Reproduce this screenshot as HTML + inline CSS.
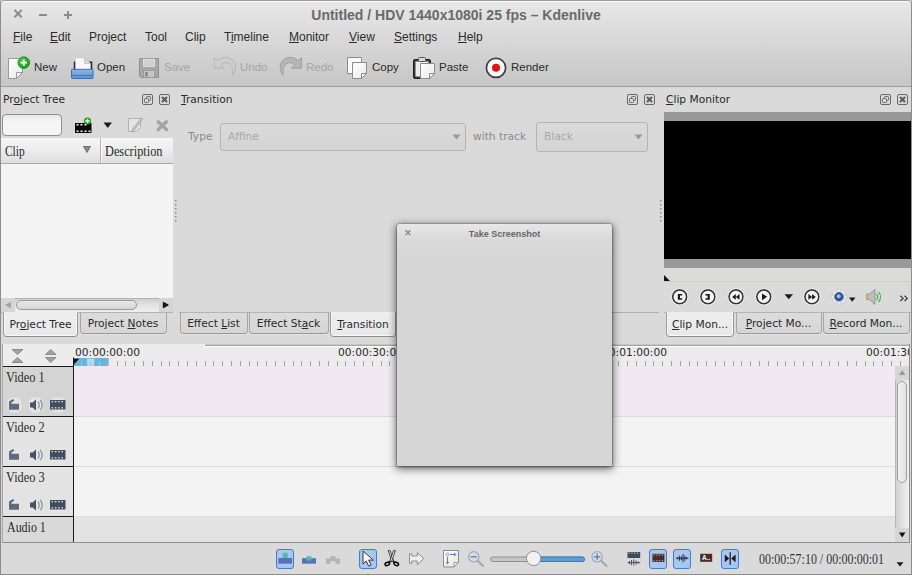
<!DOCTYPE html>
<html><head><meta charset="utf-8"><title>Kdenlive</title>
<style>
*{box-sizing:border-box;margin:0;padding:0}
html,body{width:912px;height:575px;overflow:hidden;background:#bdbdbd}
body{position:relative;font-family:"DejaVu Sans","Liberation Sans",sans-serif;font-size:10.67px;color:#2a2a2a}
.a{position:absolute}
svg{position:absolute;overflow:visible}
#win{position:absolute;left:0;top:0;width:912px;height:575px;background:#dadada;border-top-left-radius:4px;border-top-right-radius:4px;overflow:hidden}
#chrome{position:absolute;left:0;top:0;width:912px;height:86px;background:linear-gradient(#e8e8e8 0,#dedede 25px,#d5d5d5 48px,#c6c6c6 86px)}
#title{position:absolute;left:0;top:6.400px;width:912px;text-align:center;font:bold 14px "Liberation Sans",sans-serif;color:#6a6a6a;line-height:18px}
.wb{position:absolute;color:#8c8c8c}
.menu{position:absolute;top:30px;font:12px "Liberation Sans",sans-serif;color:#2b2b2b;line-height:14px;white-space:nowrap}
u{text-decoration:underline;text-underline-offset:1px}
.tb{position:absolute;top:59.700px;font:11.500px "Liberation Sans",sans-serif;color:#2b2b2b;line-height:14px;white-space:nowrap}
.tb.dis{color:#a4a4a4}
.dt{position:absolute;white-space:nowrap;line-height:13px;color:#2a2a2a}
.serif{font-family:"Liberation Serif",serif;position:absolute;white-space:nowrap;transform-origin:0 0;color:#2a2a2a}
.tab{position:absolute;top:312px;border:1px solid #a6a6a6;border-top-color:#b4b4b4;border-radius:0 0 4px 4px;background:linear-gradient(#dcdcdc,#d6d6d6);text-align:center;white-space:nowrap;line-height:21px;height:22px;color:#2a2a2a;box-shadow:0 1px 0 #e4e4e4;border-bottom-color:#979797;text-indent:-1px}
.tab.act{background:linear-gradient(#eeeeee,#e8e8e8);height:25px;line-height:24px;border-top-color:#eee;border-color:#eee #9a9a9a #8e8e8e #9a9a9a;box-shadow:inset 0 -1px 0 #f8f8f8,inset 1px 0 0 #f6f6f6,inset -1px 0 0 #f6f6f6;text-indent:0}
.dbtn{position:absolute;top:94px;width:11px;height:11px;border:1px solid #6a6a6a;border-radius:2px}
.combo{position:absolute;border:1px solid #b4b4b4;border-radius:3px;background:linear-gradient(#dadada,#d4d4d4);color:#a8a8a8;line-height:26px;padding-left:7px}
.sel{position:absolute;top:549px;height:20px;border:1px solid #3b7fd6;border-radius:3px;background:#a9c6ee}
.trk{position:absolute;left:3px;width:71px;background:#d6d6d6;border-top:1px solid #1a1a1a;border-right:1px solid #1a1a1a}
.tl{position:absolute;left:74px;width:821px}
.rl{position:absolute;top:347px;line-height:12px;white-space:nowrap;color:#2a2a2a}
</style></head><body>
<div id="win">
<div id="chrome"></div>
<div id="title">Untitled / HDV 1440x1080i 25 fps – Kdenlive</div>
<!-- window buttons -->
<svg class="wb" style="left:0;top:0" width="90" height="28" viewBox="0 0 90 28"><g stroke="#8c8c8c" stroke-width="2" fill="none"><path d="M14.500 10l7.200 7.200M21.700 10l-7.200 7.200"/><path d="M39 15h8"/><path d="M64 15h8M68 11v8"/></g></svg>
<!-- menu -->
<div class="menu" style="left:13px"><u>F</u>ile</div>
<div class="menu" style="left:50px"><u>E</u>dit</div>
<div class="menu" style="left:89px">Project</div>
<div class="menu" style="left:145px">Tool</div>
<div class="menu" style="left:185px">Clip</div>
<div class="menu" style="left:224px">T<u>i</u>meline</div>
<div class="menu" style="left:289px"><u>M</u>onitor</div>
<div class="menu" style="left:349px"><u>V</u>iew</div>
<div class="menu" style="left:394px"><u>S</u>ettings</div>
<div class="menu" style="left:458px"><u>H</u>elp</div>
<!-- toolbar labels -->
<div class="tb" style="left:34px">New</div>
<div class="tb" style="left:97px">Open</div>
<div class="tb dis" style="left:164px">Save</div>
<div class="tb dis" style="left:240px">Undo</div>
<div class="tb dis" style="left:306px">Redo</div>
<div class="tb" style="left:372px">Copy</div>
<div class="tb" style="left:439px">Paste</div>
<div class="tb" style="left:511px">Render</div>
<div class="a" style="left:0;top:86px;width:912px;height:1px;background:#a0a0a0"></div>
<!--TBI-S--><svg style="left:0;top:48px" width="560" height="40" viewBox="0 48 560 40">
<defs>
<linearGradient id="pg" x1="0" y1="0" x2="1" y2="1"><stop offset="0" stop-color="#ffffff"/><stop offset="1" stop-color="#e9e9e9"/></linearGradient>
<linearGradient id="fold" x1="0" y1="0" x2="0" y2="1"><stop offset="0" stop-color="#8fb6e6"/><stop offset="1" stop-color="#5d8fd0"/></linearGradient>
<radialGradient id="grn" cx="0.4" cy="0.35" r="0.7"><stop offset="0" stop-color="#4fd04a"/><stop offset="1" stop-color="#0f9a10"/></radialGradient>
</defs>
<!-- New -->
<path d="M8.5 58.5h14v14l-6 6h-8z" fill="url(#pg)" stroke="#9a9a9a" stroke-width="1"/>
<path d="M16.5 78.5v-6h6z" fill="#f6f6f6" stroke="#9a9a9a" stroke-width="1" stroke-linejoin="round"/>
<circle cx="23.8" cy="62.6" r="5.8" fill="url(#grn)" stroke="#0b8a0c" stroke-width="0.8"/>
<path d="M20.6 62.6h6.4M23.8 59.4v6.4" stroke="#fff" stroke-width="1.9" fill="none"/>
<!-- Open -->
<path d="M73.800 61.500h18.500v9h-18.500z" fill="#1b2a4c"/>
<path d="M75.500 58h9l6 5.500v8h-15z" fill="#f8f8f8" stroke="#cfcfcf" stroke-width="0.600"/>
<path d="M84.500 58v5.500h6z" fill="#dedede" stroke="#b4b4b4" stroke-width="0.600" stroke-linejoin="round"/>
<rect x="71.500" y="69.300" width="21.500" height="9.200" rx="0.800" fill="url(#fold)" stroke="#3f6fb5" stroke-width="1"/>
<path d="M72 75.500h20.500" stroke="#4674bc" stroke-width="1"/>
<!-- Save (disabled) -->
<g opacity="0.55">
<path d="M139.500 58.500h19v19h-17.500l-1.500-1.500z" fill="#8a8a8a" stroke="#5e5e5e" stroke-width="1"/>
<rect x="142.500" y="58.500" width="13" height="9" fill="#e8e8e8" stroke="#6a6a6a" stroke-width="0.6"/>
<path d="M144 61h10M144 63h10M144 65h10" stroke="#b0b0b0" stroke-width="0.7"/>
<rect x="143.500" y="70.500" width="11" height="7" fill="#c4c4c4" stroke="#5e5e5e" stroke-width="0.6"/>
<rect x="145" y="72" width="3" height="4.500" fill="#5e5e5e"/>
</g>
<!-- Undo (disabled) -->
<path d="M214.200 58L218 60.500C222 55.500 232 56 235 64C236.500 69 234.500 73 232.500 75C233.500 70 232 64.500 227.500 63C224.500 62 222 63.500 221 65L224.200 68.200L214.200 68.200Z" fill="#cecece" stroke="#b2b2b2" stroke-width="0.900" stroke-linejoin="round"/>
<!-- Redo (disabled) -->
<path d="M301.500 58L297.700 60.500C293.700 55.500 283.700 56 280.700 64C279.200 69 281.200 73 283.200 75C282.200 70 283.700 64.500 288.200 63C291.200 62 293.700 63.500 294.700 65L291.500 68.200L301.500 68.200Z" fill="#b6b6b6" stroke="#9c9c9c" stroke-width="0.900" stroke-linejoin="round"/>
<!-- Copy -->
<path d="M347.500 57.500h14v16h-14z" fill="#fbfbfb" stroke="#8c8c8c" stroke-width="1"/>
<path d="M352.500 62.500h14v11l-5 5h-9z" fill="url(#pg)" stroke="#8c8c8c" stroke-width="1"/>
<path d="M361.500 78.500v-5h5z" fill="#f4f4f4" stroke="#8c8c8c" stroke-width="1" stroke-linejoin="round"/>
<!-- Paste -->
<rect x="413.500" y="59.500" width="17" height="19" rx="1.500" fill="#3a3a3a" stroke="#1e1e1e" stroke-width="1"/>
<rect x="415.500" y="61.500" width="13" height="15" fill="#ededed"/>
<rect x="418.500" y="57.500" width="7" height="4" rx="1" fill="#d8d8d8" stroke="#555" stroke-width="1"/>
<path d="M420.500 63.500h14v10l-5 5h-9z" fill="url(#pg)" stroke="#8c8c8c" stroke-width="1"/>
<path d="M429.500 78.500v-5h5z" fill="#f4f4f4" stroke="#8c8c8c" stroke-width="1" stroke-linejoin="round"/>
<!-- Render -->
<circle cx="496" cy="67.800" r="10.800" fill="#c4c4c4"/>
<circle cx="496" cy="67.800" r="9.600" fill="#f8f8f8" stroke="#3c3c3c" stroke-width="1.600"/>
<circle cx="496" cy="67.800" r="4" fill="#e01212"/>
</svg>
<!--TBI-E-->
<!--DK-S--><!-- Project Tree dock -->
<div class="dt" style="left:3px;top:93px">Pr<u>o</u>ject Tree</div>
<svg style="left:142px;top:94px" width="30" height="11" viewBox="0 0 30 11"><g fill="none" stroke="#6a6a6a" stroke-width="1"><rect x="0.500" y="0.500" width="10" height="10" rx="1.500"/><rect x="4.500" y="2.500" width="4" height="4" rx="0.800"/><rect x="2.500" y="4.500" width="4" height="4" rx="0.800" fill="#dadada"/><rect x="17.500" y="0.500" width="10" height="10" rx="1.500"/></g><path d="M20 3l5 5M25 3l-5 5" stroke="#5a5a5a" stroke-width="2"/></svg>
<div class="a" style="left:2px;top:114px;width:60px;height:22px;border:1px solid #919191;border-radius:4px;background:linear-gradient(#e6e6e6,#f5f5f5 30%,#f5f5f5)"></div>
<svg style="left:70px;top:112px" width="104" height="26" viewBox="70 112 104 26">
<!-- add clip -->
<rect x="75" y="123" width="16.500" height="10" fill="#0c0c0c"/>
<g fill="#f0f0f0"><rect x="76.500" y="124" width="2" height="1.500"/><rect x="80.500" y="124" width="2" height="1.500"/><rect x="84.500" y="124" width="2" height="1.500"/><rect x="76.500" y="130.500" width="2" height="1.500"/><rect x="80.500" y="130.500" width="2" height="1.500"/><rect x="84.500" y="130.500" width="2" height="1.500"/><rect x="88.500" y="130.500" width="2" height="1.500"/></g>
<circle cx="87.500" cy="121" r="3.600" fill="#1aa51a"/><path d="M85.300 121h4.400M87.500 118.800v4.400" stroke="#fff" stroke-width="1.300"/>
<path d="M103.500 122.500h8.500l-4.250 5.500z" fill="#1c1c1c"/>
<!-- edit (disabled) -->
<g opacity="0.85"><path d="M128.500 118.500h12v9l-4 4h-8z" fill="#e6e6e6" stroke="#aaaaaa" stroke-width="1"/><path d="M141.500 117.500l-9 11.500-1 2.500 2.500-1 9-11.500z" fill="#bcbcbc" stroke="#a0a0a0" stroke-width="0.700"/></g>
<!-- delete (disabled) -->
<path d="M158.200 121.800l8.300 7.800M166.500 121.800l-8.300 7.800" stroke="#a4a4a4" stroke-width="3.400" stroke-linecap="round"/>
</svg>
<!-- tree header -->
<div class="a" style="left:1px;top:138px;width:172px;height:26px;background:linear-gradient(#f6f6f6,#ececec 50%,#dedede);border-bottom:1px solid #a8a8a8"></div>
<div class="a" style="left:100px;top:138px;width:1px;height:25px;background:#b4b4b4"></div>
<div class="a" style="left:101px;top:138px;width:1px;height:25px;background:#f8f8f8"></div>
<div class="serif" id="hclip" style="left:5px;top:143px;font-size:14.670px;line-height:17px;transform:scaleX(0.780)">Clip</div>
<div class="serif" id="hdesc" style="left:105px;top:143px;font-size:14.670px;line-height:17px;transform:scaleX(0.840)">Description</div>
<svg style="left:83px;top:146px" width="8" height="7" viewBox="0 0 8 7"><path d="M0.500 0.500h7l-3.500 6z" fill="#8c8c8c" stroke="#5c5c5c" stroke-width="0.800"/></svg>
<div class="a" style="left:1px;top:164px;width:172px;height:134px;background:#f4f4f4"></div>
<!-- h scrollbar -->
<div class="a" style="left:1px;top:298px;width:172px;height:14px;background:#d5d5d5"></div>
<div class="a" style="left:15px;top:298px;width:144px;height:14px;background:linear-gradient(#cfcfcf,#e0e0e0 40%,#f0f0f0);border-top:1px solid #b2b2b2"></div>
<div class="a" style="left:16px;top:300px;width:121px;height:10px;border:1px solid #9a9a9a;border-radius:5px;background:linear-gradient(#e8e8e8,#d6d6d6)"></div>
<svg style="left:4px;top:300px" width="166" height="10" viewBox="4 300 166 10"><path d="M10.900 302v6.200l-6-3.100z" fill="#a2a2a2"/><path d="M163.500 302.500v5l4.500-2.500z" fill="#161616" stroke="#161616" stroke-width="1.400" stroke-linejoin="round"/></svg>
<!-- tabs left -->
<div class="a" style="left:1px;top:312px;width:172px;height:1px;background:#b0b0b0"></div>
<div class="tab act" style="left:3px;width:75px">Pr<u>o</u>ject Tree</div>
<div class="tab" style="left:80px;width:87px">Project <u>N</u>otes</div>
<!-- splitter handles -->
<svg style="left:174px;top:200px" width="4" height="26" viewBox="0 0 4 26"><g fill="#8c8c8c"><rect x="1" y="0" width="1.500" height="1.500"/><rect x="1" y="4" width="1.500" height="1.500"/><rect x="1" y="8" width="1.500" height="1.500"/><rect x="1" y="12" width="1.500" height="1.500"/><rect x="1" y="16" width="1.500" height="1.500"/><rect x="1" y="20" width="1.500" height="1.500"/></g></svg>
<svg style="left:659px;top:200px" width="4" height="26" viewBox="0 0 4 26"><g fill="#8c8c8c"><rect x="1" y="0" width="1.500" height="1.500"/><rect x="1" y="4" width="1.500" height="1.500"/><rect x="1" y="8" width="1.500" height="1.500"/><rect x="1" y="12" width="1.500" height="1.500"/><rect x="1" y="16" width="1.500" height="1.500"/><rect x="1" y="20" width="1.500" height="1.500"/></g></svg>
<!-- Transition dock -->
<div class="dt" style="left:181px;top:93px"><u>T</u>ransition</div>
<svg style="left:627px;top:94px" width="30" height="11" viewBox="0 0 30 11"><g fill="none" stroke="#6a6a6a" stroke-width="1"><rect x="0.500" y="0.500" width="10" height="10" rx="1.500"/><rect x="4.500" y="2.500" width="4" height="4" rx="0.800"/><rect x="2.500" y="4.500" width="4" height="4" rx="0.800" fill="#dadada"/><rect x="17.500" y="0.500" width="10" height="10" rx="1.500"/></g><path d="M20 3l5 5M25 3l-5 5" stroke="#5a5a5a" stroke-width="2"/></svg>
<div class="dt" style="left:188px;top:130px;color:#8a8a8a">Type</div>
<div class="combo" style="left:220px;top:123px;width:246px;height:28px">Affine</div>
<div class="dt" style="left:473px;top:130px;color:#8a8a8a">with track</div>
<div class="combo" style="left:536px;top:122px;width:112px;height:30px;line-height:28px">Black</div>
<svg style="left:452px;top:134px" width="192" height="6" viewBox="452 134 192 6"><path d="M452.500 134.500h8l-4 5z" fill="#9a9a9a"/><path d="M634.500 134.500h8l-4 5z" fill="#9a9a9a"/></svg>
<div class="a" style="left:179px;top:312px;width:480px;height:1px;background:#b0b0b0"></div>
<div class="tab" style="left:180px;width:68px">Effect <u>L</u>ist</div>
<div class="tab" style="left:249px;width:80px">Effect St<u>a</u>ck</div>
<div class="tab act" style="left:330px;width:66px"><u>T</u>ransition</div>
<!-- Clip Monitor dock -->
<div class="dt" style="left:666px;top:93px"><u>C</u>lip Monitor</div>
<svg style="left:880px;top:94px" width="30" height="11" viewBox="0 0 30 11"><g fill="none" stroke="#6a6a6a" stroke-width="1"><rect x="0.500" y="0.500" width="10" height="10" rx="1.500"/><rect x="4.500" y="2.500" width="4" height="4" rx="0.800"/><rect x="2.500" y="4.500" width="4" height="4" rx="0.800" fill="#dadada"/><rect x="17.500" y="0.500" width="10" height="10" rx="1.500"/></g><path d="M20 3l5 5M25 3l-5 5" stroke="#5a5a5a" stroke-width="2"/></svg>
<div class="a" style="left:664px;top:112px;width:248px;height:156px;background:#999999"></div>
<div class="a" style="left:664px;top:121px;width:248px;height:138px;background:#000"></div>
<div class="a" style="left:664px;top:268px;width:248px;height:13px;background:#dbdbdb"></div>
<div class="a" style="left:664px;top:281px;width:248px;height:1px;background:#cdcdc6"></div>
<svg style="left:664px;top:275px" width="7" height="6" viewBox="0 0 7 6"><path d="M0 0l6 6h-6z" fill="#141414"/></svg>
<!--MON-S--><svg style="left:664px;top:284px" width="248" height="26" viewBox="664 284 248 26">
<g fill="#f4f4f4" stroke="#363636" stroke-width="1.700">
<circle cx="679.700" cy="296.800" r="7"/><circle cx="707.900" cy="296.800" r="7"/><circle cx="736" cy="296.800" r="7"/><circle cx="763.800" cy="296.800" r="7"/><circle cx="811.900" cy="296.800" r="7"/>
</g>
<g fill="none" stroke="#ececec" stroke-width="1" opacity="0.9">
<circle cx="679.700" cy="296.800" r="8.300"/><circle cx="707.900" cy="296.800" r="8.300"/><circle cx="736" cy="296.800" r="8.300"/><circle cx="763.800" cy="296.800" r="8.300"/><circle cx="811.900" cy="296.800" r="8.300"/>
</g>
<path d="M682.200 294h-4.400v5.700h4.400v-1.500h-2.200v-2.700h2.200z" fill="#1a1a1a"/>
<path d="M705.400 294h4.400v5.700h-4.400v-1.500h2.200v-2.700h-2.200z" fill="#1a1a1a"/>
<path d="M735.800 294.100v5.600l-3.700-2.800zM739.500 294.100v5.600l-3.700-2.800z" fill="#1a1a1a"/>
<path d="M762 293.400v6.800l5.200-3.400z" fill="#1a1a1a"/>
<path d="M808.400 294.100v5.600l3.700-2.800zM812.100 294.100v5.600l3.700-2.800z" fill="#1a1a1a"/>
<path d="M784.500 294.300h8.500l-4.250 5z" fill="#1a1a1a"/>
<!-- gear -->
<g transform="translate(839 296.800)">
<g fill="#e9e9e9" stroke="#c2c2c2" stroke-width="0.600">
<circle r="6"/>
<rect x="-1.600" y="-8" width="3.200" height="16" rx="0.800"/>
<rect x="-1.600" y="-8" width="3.200" height="16" rx="0.800" transform="rotate(45)"/>
<rect x="-1.600" y="-8" width="3.200" height="16" rx="0.800" transform="rotate(90)"/>
<rect x="-1.600" y="-8" width="3.200" height="16" rx="0.800" transform="rotate(135)"/>
</g>
<circle r="5.700" fill="#e9e9e9"/>
<circle r="4.300" fill="#2a579c" stroke="#1b3d78" stroke-width="0.600"/>
<circle cx="-0.300" cy="-0.600" r="2" fill="#9fc0ea"/>
</g>
<path d="M849 297.500h6.500l-3.250 4.300z" fill="#1a1a1a"/>
<!-- speaker -->
<path d="M866.500 294h3l5.500-4.800v15.200l-5.500-4.800h-3z" fill="#bdbdbd" stroke="#8c8c8c" stroke-width="0.800" stroke-linejoin="round"/>
<rect x="866.300" y="294.300" width="1.600" height="5" fill="#e8a23a"/>
<path d="M876.500 293.800c1.400 1.800 1.400 4.400 0 6.200M878.500 291.800c2.600 3 2.600 7.200 0 10.200" fill="none" stroke="#3fb53a" stroke-width="1.200"/>
<!-- chevrons -->
<path d="M900.300 295.800l2.800 2.600-2.800 2.600M904.500 295.800l2.800 2.600-2.800 2.600" fill="none" stroke="#3a3a3a" stroke-width="1.200"/>
</svg>
<!--MON-E-->
<div class="a" style="left:664px;top:312px;width:248px;height:1px;background:#b0b0b0"></div>
<div class="tab act" style="left:666px;width:68px"><u>C</u>lip Mon...</div>
<div class="tab" style="left:736px;width:86px"><u>P</u>roject Mo...</div>
<div class="tab" style="left:823px;width:87px"><u>R</u>ecord Mon...</div>
<!--DK-E-->
<!--TL-S--><div class="a" style="left:3px;top:344px;width:906px;height:22px;background:#ececec"></div>
<div class="a" style="left:204px;top:344px;width:705px;height:1px;background:#c6c6c6"></div>
<div class="a" style="left:204px;top:345px;width:705px;height:1px;background:#a6a6a6"></div>
<div class="a" style="left:204px;top:346px;width:705px;height:1px;background:#ffffff"></div>
<div class="a" style="left:204px;top:344px;width:1px;height:4px;background:#ffffff"></div>
<svg style="left:0;top:344px" width="912" height="22" viewBox="0 344 912 22"><rect x="73" y="358" width="35.600" height="8" fill="#66b4e0"/><rect x="87" y="358.500" width="7.200" height="7.500" fill="#b4dcec" stroke="#9cb8c8" stroke-width="0.600"/><rect x="106.800" y="358.500" width="1.800" height="7.500" fill="#a4acb2"/><rect x="73" y="357.500" width="1" height="9" fill="#1a1a1a"/><rect x="81" y="361" width="1" height="5" fill="#9cc4de"/><rect x="90" y="361" width="1" height="5" fill="#9cc4de"/><rect x="99" y="361" width="1" height="5" fill="#9cc4de"/><rect x="108" y="361" width="1" height="5" fill="#9cc4de"/><rect x="117" y="361" width="1" height="5" fill="#a0a0a0"/><rect x="125" y="361" width="1" height="5" fill="#a0a0a0"/><rect x="134" y="361" width="1" height="5" fill="#a0a0a0"/><rect x="143" y="361" width="1" height="5" fill="#a0a0a0"/><rect x="152" y="361" width="1" height="5" fill="#a0a0a0"/><rect x="161" y="361" width="1" height="5" fill="#a0a0a0"/><rect x="169" y="361" width="1" height="5" fill="#a0a0a0"/><rect x="178" y="361" width="1" height="5" fill="#a0a0a0"/><rect x="187" y="361" width="1" height="5" fill="#a0a0a0"/><rect x="196" y="361" width="1" height="5" fill="#a0a0a0"/><rect x="205" y="361" width="1" height="5" fill="#a0a0a0"/><rect x="213" y="361" width="1" height="5" fill="#a0a0a0"/><rect x="222" y="361" width="1" height="5" fill="#a0a0a0"/><rect x="231" y="361" width="1" height="5" fill="#a0a0a0"/><rect x="240" y="361" width="1" height="5" fill="#a0a0a0"/><rect x="249" y="361" width="1" height="5" fill="#a0a0a0"/><rect x="257" y="361" width="1" height="5" fill="#a0a0a0"/><rect x="266" y="361" width="1" height="5" fill="#a0a0a0"/><rect x="275" y="361" width="1" height="5" fill="#a0a0a0"/><rect x="284" y="361" width="1" height="5" fill="#a0a0a0"/><rect x="293" y="361" width="1" height="5" fill="#a0a0a0"/><rect x="301" y="361" width="1" height="5" fill="#a0a0a0"/><rect x="310" y="361" width="1" height="5" fill="#a0a0a0"/><rect x="319" y="361" width="1" height="5" fill="#a0a0a0"/><rect x="328" y="361" width="1" height="5" fill="#a0a0a0"/><rect x="337" y="361" width="1" height="5" fill="#a0a0a0"/><rect x="345" y="361" width="1" height="5" fill="#a0a0a0"/><rect x="354" y="361" width="1" height="5" fill="#a0a0a0"/><rect x="363" y="361" width="1" height="5" fill="#a0a0a0"/><rect x="372" y="361" width="1" height="5" fill="#a0a0a0"/><rect x="381" y="361" width="1" height="5" fill="#a0a0a0"/><rect x="389" y="361" width="1" height="5" fill="#a0a0a0"/><rect x="398" y="361" width="1" height="5" fill="#a0a0a0"/><rect x="407" y="361" width="1" height="5" fill="#a0a0a0"/><rect x="416" y="361" width="1" height="5" fill="#a0a0a0"/><rect x="425" y="361" width="1" height="5" fill="#a0a0a0"/><rect x="433" y="361" width="1" height="5" fill="#a0a0a0"/><rect x="442" y="361" width="1" height="5" fill="#a0a0a0"/><rect x="451" y="361" width="1" height="5" fill="#a0a0a0"/><rect x="460" y="361" width="1" height="5" fill="#a0a0a0"/><rect x="469" y="361" width="1" height="5" fill="#a0a0a0"/><rect x="477" y="361" width="1" height="5" fill="#a0a0a0"/><rect x="486" y="361" width="1" height="5" fill="#a0a0a0"/><rect x="495" y="361" width="1" height="5" fill="#a0a0a0"/><rect x="504" y="361" width="1" height="5" fill="#a0a0a0"/><rect x="513" y="361" width="1" height="5" fill="#a0a0a0"/><rect x="521" y="361" width="1" height="5" fill="#a0a0a0"/><rect x="530" y="361" width="1" height="5" fill="#a0a0a0"/><rect x="539" y="361" width="1" height="5" fill="#a0a0a0"/><rect x="548" y="361" width="1" height="5" fill="#a0a0a0"/><rect x="557" y="361" width="1" height="5" fill="#a0a0a0"/><rect x="565" y="361" width="1" height="5" fill="#a0a0a0"/><rect x="574" y="361" width="1" height="5" fill="#a0a0a0"/><rect x="583" y="361" width="1" height="5" fill="#a0a0a0"/><rect x="592" y="361" width="1" height="5" fill="#a0a0a0"/><rect x="601" y="361" width="1" height="5" fill="#a0a0a0"/><rect x="609" y="361" width="1" height="5" fill="#a0a0a0"/><rect x="618" y="361" width="1" height="5" fill="#a0a0a0"/><rect x="627" y="361" width="1" height="5" fill="#a0a0a0"/><rect x="636" y="361" width="1" height="5" fill="#a0a0a0"/><rect x="645" y="361" width="1" height="5" fill="#a0a0a0"/><rect x="653" y="361" width="1" height="5" fill="#a0a0a0"/><rect x="662" y="361" width="1" height="5" fill="#a0a0a0"/><rect x="671" y="361" width="1" height="5" fill="#a0a0a0"/><rect x="680" y="361" width="1" height="5" fill="#a0a0a0"/><rect x="689" y="361" width="1" height="5" fill="#a0a0a0"/><rect x="697" y="361" width="1" height="5" fill="#a0a0a0"/><rect x="706" y="361" width="1" height="5" fill="#a0a0a0"/><rect x="715" y="361" width="1" height="5" fill="#a0a0a0"/><rect x="724" y="361" width="1" height="5" fill="#a0a0a0"/><rect x="733" y="361" width="1" height="5" fill="#a0a0a0"/><rect x="741" y="361" width="1" height="5" fill="#a0a0a0"/><rect x="750" y="361" width="1" height="5" fill="#a0a0a0"/><rect x="759" y="361" width="1" height="5" fill="#a0a0a0"/><rect x="768" y="361" width="1" height="5" fill="#a0a0a0"/><rect x="777" y="361" width="1" height="5" fill="#a0a0a0"/><rect x="785" y="361" width="1" height="5" fill="#a0a0a0"/><rect x="794" y="361" width="1" height="5" fill="#a0a0a0"/><rect x="803" y="361" width="1" height="5" fill="#a0a0a0"/><rect x="812" y="361" width="1" height="5" fill="#a0a0a0"/><rect x="821" y="361" width="1" height="5" fill="#a0a0a0"/><rect x="829" y="361" width="1" height="5" fill="#a0a0a0"/><rect x="838" y="361" width="1" height="5" fill="#a0a0a0"/><rect x="847" y="361" width="1" height="5" fill="#a0a0a0"/><rect x="856" y="361" width="1" height="5" fill="#a0a0a0"/><rect x="865" y="361" width="1" height="5" fill="#a0a0a0"/><rect x="873" y="361" width="1" height="5" fill="#a0a0a0"/><rect x="882" y="361" width="1" height="5" fill="#a0a0a0"/><rect x="891" y="361" width="1" height="5" fill="#a0a0a0"/><rect x="900" y="361" width="1" height="5" fill="#a0a0a0"/><path d="M73.500 358.800h5.800l-5.800 6z" fill="#101010"/><g fill="#a2a2a2" stroke="#7c7c7c" stroke-width="0.800" stroke-linejoin="round"><path d="M12 349.500h11l-5.500 5z"/><path d="M12 362.500h11l-5.500-5z"/><path d="M45.500 354.500h10.500l-5.250-5z"/><path d="M45.500 357.500h10.500l-5.250 5z"/></g></svg>
<div class="a" style="left:74px;top:344px;width:835px;height:22px;overflow:hidden">
<div class="rl" style="left:1px;top:3px">00:00:00:00</div>
<div class="rl" style="left:264px;top:3px">00:00:30:00</div>
<div class="rl" style="left:528px;top:3px">00:01:00:00</div>
<div class="rl" style="left:792px;top:3px">00:01:30:00</div>
</div>
<div class="a" style="left:74px;top:366px;width:821px;height:50px;background:#f0e9f1;border-top:1px solid #f0e9f1"></div>
<div class="trk" style="top:366px;height:50px;background:#d4d4d4"></div>
<div class="serif" style="left:6px;top:369px;font-size:14.670px;line-height:17px;transform:scaleX(0.840)">Video 1</div>
<svg style="left:3px;top:396px" width="70" height="20" viewBox="3 30 70 20"><g fill="#e6e6e6" opacity="0.9"><path d="M11 31.500h7l3.500 3.500v8l-3.500 3.500h-7l-3.500-3.500v-8z"/><path d="M32.500 31.500h7l3.500 3.500v8l-3.500 3.500h-7l-3.500-3.500v-8z"/><path d="M54 31.500h8l3.500 3.500v8l-3.500 3.500h-8l-3.500-3.500v-8z"/></g><path d="M9 43.700v-8.200l4-2.600 1.400 1.500-3 2v1.400h7.600v5.900z" fill="#5f6b80"/><path d="M30 36.500h2.500l3.500-3v11l-3.500-3h-2.500z" fill="#46566a"/><path d="M38 35.500c1.600 1.800 1.600 5.200 0 7M40.200 33.800c2.600 2.800 2.600 7.600 0 10.400" fill="none" stroke="#7a8898" stroke-width="1.100"/><rect x="50" y="34" width="15.500" height="9.500" fill="#3e4e60"/><g fill="#dcdcdc"><rect x="51.500" y="35" width="1.600" height="1.300"/><rect x="54.800" y="35" width="1.600" height="1.300"/><rect x="58.100" y="35" width="1.600" height="1.300"/><rect x="61.400" y="35" width="1.600" height="1.300"/><rect x="51.500" y="41.200" width="1.600" height="1.300"/><rect x="54.800" y="41.200" width="1.600" height="1.300"/><rect x="58.100" y="41.200" width="1.600" height="1.300"/><rect x="61.400" y="41.200" width="1.600" height="1.300"/></g></svg>
<div class="a" style="left:74px;top:416px;width:821px;height:50px;background:#f3f3f3;border-top:1px solid #ddd8dd"></div>
<div class="trk" style="top:416px;height:50px;background:#e3e3e3"></div>
<div class="serif" style="left:6px;top:419px;font-size:14.670px;line-height:17px;transform:scaleX(0.840)">Video 2</div>
<svg style="left:3px;top:446px" width="70" height="20" viewBox="3 30 70 20"><g fill="#e6e6e6" opacity="0.9"><path d="M11 31.500h7l3.500 3.500v8l-3.500 3.500h-7l-3.500-3.500v-8z"/><path d="M32.500 31.500h7l3.500 3.500v8l-3.500 3.500h-7l-3.500-3.500v-8z"/><path d="M54 31.500h8l3.500 3.500v8l-3.500 3.500h-8l-3.500-3.500v-8z"/></g><path d="M9 43.700v-8.200l4-2.600 1.400 1.500-3 2v1.400h7.600v5.900z" fill="#5f6b80"/><path d="M30 36.500h2.500l3.500-3v11l-3.500-3h-2.500z" fill="#46566a"/><path d="M38 35.500c1.600 1.800 1.600 5.200 0 7M40.200 33.800c2.600 2.800 2.600 7.600 0 10.400" fill="none" stroke="#7a8898" stroke-width="1.100"/><rect x="50" y="34" width="15.500" height="9.500" fill="#3e4e60"/><g fill="#dcdcdc"><rect x="51.500" y="35" width="1.600" height="1.300"/><rect x="54.800" y="35" width="1.600" height="1.300"/><rect x="58.100" y="35" width="1.600" height="1.300"/><rect x="61.400" y="35" width="1.600" height="1.300"/><rect x="51.500" y="41.200" width="1.600" height="1.300"/><rect x="54.800" y="41.200" width="1.600" height="1.300"/><rect x="58.100" y="41.200" width="1.600" height="1.300"/><rect x="61.400" y="41.200" width="1.600" height="1.300"/></g></svg>
<div class="a" style="left:74px;top:466px;width:821px;height:50px;background:#f3f3f3;border-top:1px solid #dcdcdc"></div>
<div class="trk" style="top:466px;height:50px;background:#e3e3e3"></div>
<div class="serif" style="left:6px;top:469px;font-size:14.670px;line-height:17px;transform:scaleX(0.840)">Video 3</div>
<svg style="left:3px;top:496px" width="70" height="20" viewBox="3 30 70 20"><g fill="#e6e6e6" opacity="0.9"><path d="M11 31.500h7l3.500 3.500v8l-3.500 3.500h-7l-3.500-3.500v-8z"/><path d="M32.500 31.500h7l3.500 3.500v8l-3.500 3.500h-7l-3.500-3.500v-8z"/><path d="M54 31.500h8l3.500 3.500v8l-3.500 3.500h-8l-3.500-3.500v-8z"/></g><path d="M9 43.700v-8.200l4-2.600 1.400 1.500-3 2v1.400h7.600v5.900z" fill="#5f6b80"/><path d="M30 36.500h2.500l3.500-3v11l-3.500-3h-2.500z" fill="#46566a"/><path d="M38 35.500c1.600 1.800 1.600 5.200 0 7M40.200 33.800c2.600 2.800 2.600 7.600 0 10.400" fill="none" stroke="#7a8898" stroke-width="1.100"/><rect x="50" y="34" width="15.500" height="9.500" fill="#3e4e60"/><g fill="#dcdcdc"><rect x="51.500" y="35" width="1.600" height="1.300"/><rect x="54.800" y="35" width="1.600" height="1.300"/><rect x="58.100" y="35" width="1.600" height="1.300"/><rect x="61.400" y="35" width="1.600" height="1.300"/><rect x="51.500" y="41.200" width="1.600" height="1.300"/><rect x="54.800" y="41.200" width="1.600" height="1.300"/><rect x="58.100" y="41.200" width="1.600" height="1.300"/><rect x="61.400" y="41.200" width="1.600" height="1.300"/></g></svg>
<div class="a" style="left:74px;top:516px;width:821px;height:26px;background:#e3e3e3;border-top:1px solid #dcdcdc"></div>
<div class="trk" style="top:516px;height:26px;background:#d9d9d9"></div>
<div class="serif" style="left:6.500px;top:519px;font-size:14.670px;line-height:17px;transform:scaleX(0.815)">Audio 1</div>
<div class="a" style="left:895px;top:366px;width:14px;height:176px;background:linear-gradient(90deg,#d2d2d2,#f0f0f0);border-left:1px solid #b6b6b6"></div>
<div class="a" style="left:895px;top:366px;width:14px;height:14px;background:#d6d6d6"></div>
<div class="a" style="left:895px;top:528px;width:14px;height:14px;background:#d6d6d6"></div>
<div class="a" style="left:897px;top:381px;width:10px;height:102px;border:1px solid #a0a0a0;border-radius:5px;background:linear-gradient(90deg,#f2f2f2,#e0e0e0)"></div>
<svg style="left:895px;top:366px" width="14" height="176" viewBox="895 366 14 176"><path d="M899 375h6.400l-3.200-5z" fill="#9a9a9a"/><path d="M899 532.600h6.400l-3.200 4.800z" fill="#111"/></svg>
<div class="a" style="left:1px;top:542px;width:909px;height:1px;background:#8e8e8e"></div>
<div class="a" style="left:909px;top:344px;width:1px;height:199px;background:#8e8e8e"></div>
<div class="a" style="left:1px;top:344px;width:1px;height:199px;background:#d2d2d2"></div>
<div class="a" style="left:2px;top:344px;width:1px;height:199px;background:#aaaaaa"></div>
<!--TL-E-->
<!--ST-S--><div class="sel" style="left:276px;width:18px"></div>
<div class="sel" style="left:359px;width:18px"></div>
<div class="sel" style="left:649px;width:18px"></div>
<div class="sel" style="left:673px;width:18px"></div>
<div class="sel" style="left:721px;width:18px"></div>
<svg style="left:270px;top:545px" width="640" height="28" viewBox="270 545 640 28">
<defs><linearGradient id="pg2" x1="0" y1="0" x2="1" y2="1"><stop offset="0" stop-color="#ffffff"/><stop offset="1" stop-color="#e4e4e4"/></linearGradient></defs>
<!-- edit mode icons -->
<rect x="278.300" y="558" width="13.700" height="5.700" fill="#5871bf"/><rect x="282.800" y="552.800" width="4.900" height="5.200" fill="#56b8ac"/>
<rect x="302" y="558.200" width="14" height="5.500" fill="#5871bf"/><rect x="306.500" y="556.200" width="4.900" height="4.500" fill="#56b8ac"/>
<path d="M326 558.500h4.500v-2.500h5v2.500h4.500v5.200h-4.500v-2.500h-5v2.500h-4.500z" fill="#b4b4b4"/>
<!-- pointer -->
<path d="M363 551v13l3.200-3 2.500 5.200 2.400-1.100-2.500-5h4.800z" fill="#f6f6f6" stroke="#3c3c3c" stroke-width="1" stroke-linejoin="round"/>
<!-- scissors -->
<path d="M391 561l-2.200 1.600M392.600 561l2.200 1.600" stroke="#111" stroke-width="1.600" fill="none"/>
<path d="M388.200 550.600h1.900l3.600 10.400-1.500 0.900z" fill="#f4f4f4" stroke="#1a1a1a" stroke-width="0.800" stroke-linejoin="round"/>
<path d="M395.400 550.600h-1.900l-3.600 10.400 1.500 0.900z" fill="#f4f4f4" stroke="#1a1a1a" stroke-width="0.800" stroke-linejoin="round"/>
<ellipse cx="387.300" cy="563.900" rx="2.300" ry="1.600" transform="rotate(-25 387.300 563.900)" fill="none" stroke="#0c0c0c" stroke-width="1.600"/>
<ellipse cx="396.300" cy="563.900" rx="2.300" ry="1.600" transform="rotate(25 396.300 563.900)" fill="none" stroke="#0c0c0c" stroke-width="1.600"/>
<!-- spacer arrow -->
<path d="M409.500 553.800h2.300v2.200h5.500v-3.400l6.500 6-6.500 6v-3.600h-5.500v2.400h-2.300z" fill="#efefef" stroke="#909090" stroke-width="1" stroke-linejoin="round"/>
<!-- fit zoom -->
<path d="M443.500 550.500h15v12l-4.500 4.500h-10.500z" fill="url(#pg2)" stroke="#8c8c8c" stroke-width="1"/>
<path d="M454 567v-4.500h4.500z" fill="#f0f0f0" stroke="#8c8c8c" stroke-width="0.800" stroke-linejoin="round"/>
<circle cx="447.500" cy="554.500" r="1.600" fill="#e0e0e0" stroke="#9a9a9a" stroke-width="0.700"/>
<path d="M450 554.500h5M447.500 557v6" stroke="#3a8ad8" stroke-width="1.100"/><path d="M454 552.800l2.600 1.700-2.600 1.700zM445.800 562l1.700 2.600 1.700-2.600z" fill="#3a8ad8"/>
<!-- zoom out -->
<path d="M477.500 560.500l5.500 5.500" stroke="#a8a8a8" stroke-width="2.200" stroke-linecap="round"/>
<circle cx="473.800" cy="556.800" r="5.200" fill="#d2deea" stroke="#a2aab2" stroke-width="1.200"/>
<path d="M470.500 556.800h6.600" stroke="#5a7aa4" stroke-width="1.200"/>
<!-- slider -->
<rect x="490.500" y="557" width="94" height="4.500" rx="2.250" fill="#c6c6c6" stroke="#909090" stroke-width="1"/>
<rect x="533" y="557" width="51.500" height="4.500" rx="2.250" fill="#5a9fda" stroke="#3c78b8" stroke-width="1"/>
<circle cx="533.600" cy="558.400" r="7.200" fill="#f2f2f2" stroke="#8e8e8e" stroke-width="1"/>
<!-- zoom in -->
<path d="M601 560.500l5.500 5.500" stroke="#a8a8a8" stroke-width="2.200" stroke-linecap="round"/>
<circle cx="597.200" cy="556.800" r="5.200" fill="#d2deea" stroke="#a2aab2" stroke-width="1.200"/>
<path d="M593.900 556.800h6.600M597.200 553.500v6.600" stroke="#5a7aa4" stroke-width="1.200"/>
<!-- split audio -->
<rect x="627.500" y="552" width="12.700" height="6" fill="#3c4c5e"/>
<g fill="#d8d8d8"><rect x="628.500" y="552.600" width="1.300" height="1"/><rect x="631.300" y="552.600" width="1.300" height="1"/><rect x="634.100" y="552.600" width="1.300" height="1"/><rect x="636.900" y="552.600" width="1.300" height="1"/></g>
<path d="M627.500 562.600h12.700M629.500 561v3.200M631.500 560v5.200M633.800 559.600v6M636 560.500v4.200M638 561.400v2.400" stroke="#46566a" stroke-width="1"/>
<!-- video thumbs -->
<rect x="652.400" y="553.800" width="12" height="8.200" fill="#4a2c2c"/>
<g fill="#c8c0d8"><rect x="653.400" y="554.500" width="1.300" height="1"/><rect x="656.200" y="554.500" width="1.300" height="1"/><rect x="659" y="554.500" width="1.300" height="1"/><rect x="661.800" y="554.500" width="1.300" height="1"/><rect x="653.400" y="560.300" width="1.300" height="1"/><rect x="656.200" y="560.300" width="1.300" height="1"/><rect x="659" y="560.300" width="1.300" height="1"/><rect x="661.800" y="560.300" width="1.300" height="1"/></g>
<!-- audio thumbs -->
<path d="M676 558.200h12.500M677.800 557v2.400M679.600 555.600v5.200M681.400 556.400v3.600M683 554v8.400M684.800 555.600v5.200M686.600 557v2.400" stroke="#2c2c3c" stroke-width="1"/>
<!-- markers comments -->
<rect x="700.200" y="553.800" width="12" height="8" fill="#4a2c2c"/>
<text x="702" y="560.300" font-family="Liberation Sans, sans-serif" font-size="6.500" font-weight="bold" fill="#ffffff">A..</text>
<!-- snap -->
<path d="M730.200 552.200v12.600" stroke="#1a1a1a" stroke-width="1.200"/><path d="M724.800 554.600v7.600l4.400-3.800zM735.600 554.600v7.600l-4.400-3.800z" fill="#1a1a1a"/>
<!-- dropdown -->
<path d="M896.500 562.300h7l-3.500 4.200z" fill="#1a1a1a"/>
</svg>
<div class="serif" id="sttime" style="left:759px;top:551px;font-size:14.670px;line-height:17px;transform:scaleX(0.817);color:#333">00:00:57:10 / 00:00:00:01</div>
<!--ST-E-->
<!--PP-S--><div class="a" style="left:396.500px;top:224px;width:215.500px;height:242px;background:linear-gradient(#e7e7e7,#d9d9d9 16px,#d6d6d6 40px);border-radius:3px 3px 0 0;box-shadow:0 0 0 1px rgba(60,60,60,0.220),0 2px 8px 1px rgba(0,0,0,0.550),0 1px 3px rgba(0,0,0,0.350)"></div>
<div class="a" style="left:396px;top:227px;width:217px;text-align:center;font:bold 9px 'Liberation Sans',sans-serif;color:#666;line-height:14px">Take Screenshot</div>
<svg style="left:403.500px;top:229px" width="8" height="8" viewBox="0 0 8 8"><path d="M1.500 1.300l4.800 4.800M6.300 1.300l-4.800 4.800" stroke="#8a8a8a" stroke-width="1.400"/></svg>
<!--PP-E-->
<div class="a" style="left:0;top:0;width:912px;height:575px;border:1px solid #909090;border-top-color:#9c9c9c;border-radius:4px 4px 0 0;box-shadow:inset 0 1px 0 #fafafa"></div>
<div class="a" style="left:0;top:0;width:1px;height:575px;background:#8c8c8c"></div>
<div class="a" style="left:911px;top:0;width:1px;height:575px;background:#8c8c8c"></div>
<div class="a" style="left:0;top:574px;width:912px;height:1px;background:#8c8c8c"></div>
</div>
</body></html>
